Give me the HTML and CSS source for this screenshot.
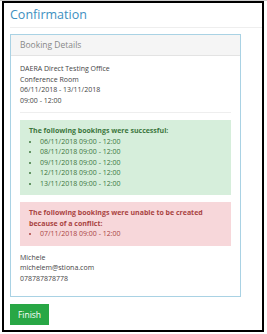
FILE: index.html
```html
<!DOCTYPE html>
<html lang="en">
<head>
    <meta charset="UTF-8">
    <meta name="viewport" content="width=device-width, initial-scale=1.0">
    <title>Confirmation</title>
    <link rel="stylesheet" href="styles.css">
</head>
<body>

    <div class="frame">
        <h1 class="page-title">Confirmation</h1>

        <div class="panel">
            <div class="panel-heading">Booking Details</div>
            <div class="panel-body">
                <p class="details">
                    DAERA Direct Testing Office<br>
                    Conference Room<br>
                    06/11/2018 - 13/11/2018<br>
                    09:00 - 12:00
                </p>

                <hr class="divider">

                <div class="alert alert-success">
                    <strong>The following bookings were successful:</strong>
                    <ul>
                        <li>06/11/2018 09:00 - 12:00</li>
                        <li>08/11/2018 09:00 - 12:00</li>
                        <li>09/11/2018 09:00 - 12:00</li>
                        <li>12/11/2018 09:00 - 12:00</li>
                        <li>13/11/2018 09:00 - 12:00</li>
                    </ul>
                </div>

                <div class="alert alert-danger">
                    <strong>The following bookings were unable to be created because of a conflict:</strong>
                    <ul>
                        <li>07/11/2018 09:00 - 12:00</li>
                    </ul>
                </div>

                <p class="details">
                    Michele<br>
                    michelem@stiona.com<br>
                    078787878778
                </p>
            </div>
        </div>

        <button class="btn-finish">Finish</button>
    </div>

</body>
</html>
```

FILE: styles.css
```css
body {
    margin: 0;
    padding: 0;
    font-family: "Open Sans", Arial, sans-serif;
    background: #fff;
    color: #444;
    border-top: 1px solid #ccc;
}
.frame {
    margin: 0 3px 0 2px;
    height: 331px;
    box-sizing: border-box;
    border: 2px solid #000;
    padding: 4px 0 0 6px;
}
.page-title {
    margin: 0 0 6px 0;
    padding: 0 0 4px 0;
    font-size: 12.5px;
    font-weight: normal;
    line-height: 16px;
    color: #3d8fbf;
    border-bottom: 1px solid #eee;
}
.panel {
    width: 231px;
    border: 1px solid #a9d2e4;
    box-sizing: border-box;
}
.panel-heading {
    height: 21px;
    line-height: 20px;
    padding: 0 9px;
    font-size: 8.5px;
    color: #888;
    background-color: #f5f5f5;
    border-bottom: 1px solid #e3e3e3;
    box-sizing: border-box;
}
.panel-body {
    padding: 8px 9px 12px 9px;
    font-size: 7px;
    line-height: 10.5px;
}
.details {
    margin: 0;
}
.divider {
    margin: 6px 0 7px 0;
    border: none;
    border-top: 1px solid #eee;
}
.alert {
    padding: 6px 9px;
    margin-bottom: 7px;
}
.alert ul {
    margin: 0;
    padding-left: 11px;
}
.alert-success {
    background-color: #d6eedb;
    color: #3c763d;
}
.alert-danger {
    background-color: #f7d7da;
    color: #a94442;
}
.btn-finish {
    margin-top: 7px;
    width: 39px;
    height: 21px;
    padding: 0;
    font-family: "Open Sans", Arial, sans-serif;
    font-size: 8.5px;
    color: #fff;
    background-color: #28a745;
    border: none;
    cursor: pointer;
}
```
